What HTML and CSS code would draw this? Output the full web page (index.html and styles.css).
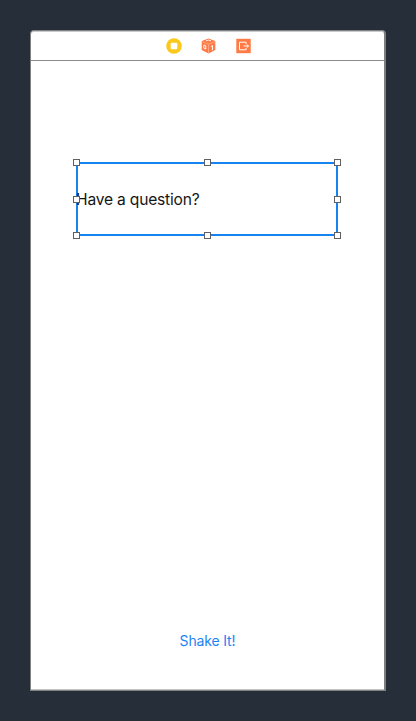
FILE: index.html
```html
<!DOCTYPE html>
<html lang="en">
<head>
<meta charset="utf-8">
<title>View Controller</title>
<link rel="stylesheet" href="styles.css">
</head>
<body>
<main class="scene">
  <header class="dock">
    <svg class="icon" viewBox="0 0 16 16"><circle cx="8" cy="8" r="7.8" fill="#fbc91c"/><rect x="4.7" y="4.7" width="6.6" height="6.6" rx="1" fill="#fff"/></svg>
    <svg class="icon" viewBox="0 0 16 16"><path d="M7.5 .5 14.3 3v9L7.5 15.5.7 12V3z" fill="#ff7a45"/><path d="M1 3.7 7.5 6.2 14 3.7M7.5 6.2v9" fill="none" stroke="#ffb798" stroke-width=".7"/><path d="M5 2.8 7.5 2.1l2.5.7M2.8 7l2 .8v3.2l-2-.9zM9.9 8.6l1.6-1v4.6" fill="none" stroke="#fff" stroke-width=".9"/></svg>
    <svg class="icon" viewBox="0 0 16 16"><rect x=".3" y=".8" width="14.4" height="14.4" fill="#ff7a45"/><path d="M10 6V4.2H3.5v7.6H10V10M7.5 8h5M10.8 6.5 12.5 8l-1.7 1.5" fill="none" stroke="#fff" stroke-width="1"/></svg>
  </header>
  <section class="view">
    <div class="label">
      <span class="question">Have a question?</span>
      <i class="handle top left"></i><i class="handle top center"></i><i class="handle top right"></i>
      <i class="handle middle left"></i><i class="handle middle right"></i>
      <i class="handle bottom left"></i><i class="handle bottom center"></i><i class="handle bottom right"></i>
    </div>
    <button class="shake">Shake It!</button>
  </section>
</main>
</body>
</html>
```

FILE: styles.css
```css
* { box-sizing: border-box; }
body {
  margin: 0;
  height: 721px;
  padding: 30px;
  overflow: hidden;
  background: #262e39;
  font-family: Inter, "Liberation Sans", sans-serif;
}
.scene {
  width: 356px;
  height: 661px;
  display: flex;
  flex-direction: column;
  background: #fff;
  border: 1px solid #7e8081;
  border-right: 2px solid #7c7e80;
  border-radius: 4px 4px 0 0;
  box-shadow: inset 0 1px #c9caca, inset 0 -1px #c3c6c4;
}
.dock {
  height: 30px;
  flex: none;
  display: flex;
  justify-content: center;
  align-items: center;
  gap: 19px;
  padding-left: 2px;
  border-bottom: 1px solid #8c8c8c;
}
.icon { width: 16px; height: 16px; }
.view {
  flex: 1;
  display: flex;
  flex-direction: column;
  align-items: center;
  justify-content: space-between;
  padding: 101px 0 39px;
}
.label {
  position: relative;
  width: 262px;
  height: 74px;
  margin-right: 1px;
  display: flex;
  align-items: center;
  border: 2px solid #1583f0;
}
.question {
  margin: 1px 0 0 -2px;
  font-size: 15.6px;
  line-height: 20px;
  letter-spacing: -.2px;
  white-space: nowrap;
  color: #151515;
}
.handle {
  position: absolute;
  width: 7px;
  height: 7px;
  background: #fff;
  border: 1px solid #606060;
}
.top { top: -5px; }
.middle { top: 32px; }
.bottom { bottom: -5px; }
.left { left: -5px; }
.center { left: 126px; }
.right { right: -5px; }
.shake {
  padding: 0;
  border: 0;
  background: none;
  font: 14px/20px Inter, "Liberation Sans", sans-serif;
  letter-spacing: -.15px;
  color: #1d83f5;
}
```
